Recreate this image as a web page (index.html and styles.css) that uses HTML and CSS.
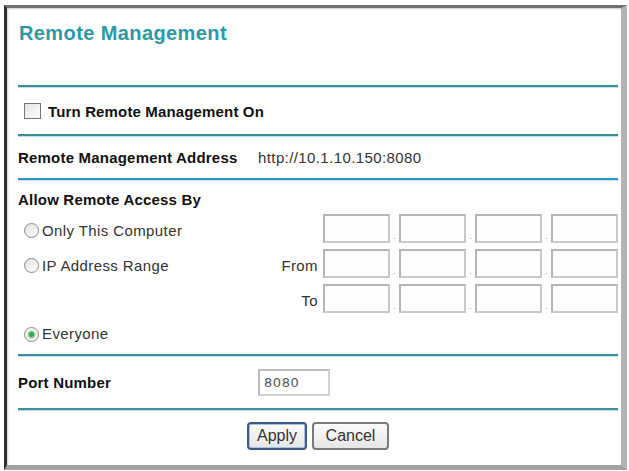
FILE: index.html
```html
<!DOCTYPE html>
<html lang="en">
<head>
    <meta charset="UTF-8">
    <title>Remote Management</title>
    <link rel="stylesheet" href="styles.css">
</head>
<body>

    <form class="frame" id="remoteForm">
        <div class="title-row">
            <h1 class="title">Remote Management</h1>
        </div>
        <div class="rule"></div>

        <div class="row check-row">
            <label class="check"><input type="checkbox" id="enable"> Turn Remote Management On</label>
        </div>
        <div class="rule"></div>

        <div class="row pair-row">
            <span class="key">Remote Management Address</span>
            <span class="value">http://10.1.10.150:8080</span>
        </div>
        <div class="rule rule-blue"></div>

        <div class="access">
            <div class="key">Allow Remote Access By</div>

            <div class="ip-row">
                <label class="opt"><input type="radio" name="access"> Only This Computer</label>
                <span class="ip-label"></span>
                <span class="ip">
                    <input type="text"><i>.</i><input type="text"><i>.</i><input type="text"><i>.</i><input type="text">
                </span>
            </div>
            <div class="ip-row">
                <label class="opt"><input type="radio" name="access"> IP Address Range</label>
                <span class="ip-label">From</span>
                <span class="ip">
                    <input type="text"><i>.</i><input type="text"><i>.</i><input type="text"><i>.</i><input type="text">
                </span>
            </div>
            <div class="ip-row">
                <span class="opt"></span>
                <span class="ip-label">To</span>
                <span class="ip">
                    <input type="text"><i>.</i><input type="text"><i>.</i><input type="text"><i>.</i><input type="text">
                </span>
            </div>

            <label class="opt everyone"><input type="radio" name="access" checked> Everyone</label>
        </div>
        <div class="rule"></div>

        <div class="row port-row">
            <span class="key">Port Number</span>
            <input type="text" class="port" value="8080">
        </div>
        <div class="rule"></div>

        <div class="buttons">
            <button type="button" class="btn btn-main">Apply</button>
            <button type="button" class="btn">Cancel</button>
        </div>
    </form>

</body>
</html>
```

FILE: styles.css
```css
body {
    margin: 0;
    background: #fff;
    font-family: "Liberation Sans", Arial, sans-serif;
    font-size: 15px;
    letter-spacing: 0.4px;
    color: #333;
}

.frame {
    box-sizing: border-box;
    width: 623px;
    height: 465px;
    margin: 5px 0 0 4px;
    padding: 0 3px 0 11px;
    border-left: 3px solid #2e2e2e;
    border-top: 3px solid #707070;
    border-right: 6px solid #b4b4b4;
    border-bottom: 5px solid #a2a2a2;
    box-shadow: inset 1px 1px 2px #ccc;
}

.title-row {
    height: 77px;
    padding-top: 14px;
    box-sizing: border-box;
}

.title {
    margin: 0;
    padding-left: 1px;
    font-size: 20px;
    line-height: 22px;
    letter-spacing: 0.4px;
    color: #2c9aa6;
}

.rule {
    height: 2px;
    background: #3b8c9c;
    box-shadow: 0 1px 0 #b9e4ea;
}

.rule-blue {
    background: #2f96cc;
    box-shadow: 0 1px 0 #bfe3f3;
}

.row {
    display: flex;
    align-items: center;
}

.check-row {
    height: 47px;
    padding-left: 6px;
    padding-top: 1px;
    box-sizing: border-box;
}

.pair-row {
    height: 42px;
}

.key {
    width: 240px;
    font-weight: bold;
    letter-spacing: 0.2px;
    color: #111;
}

.check {
    display: flex;
    align-items: center;
    font-weight: bold;
    letter-spacing: 0.15px;
    color: #111;
}

input[type="checkbox"],
input[type="radio"] {
    appearance: none;
    margin: 0 7px 0 0;
    width: 15px;
    height: 15px;
    border: 1px solid #8a8a8a;
    background: linear-gradient(135deg, #e2e2e2, #fff);
    box-sizing: border-box;
}

input[type="checkbox"] {
    width: 17px;
    height: 16px;
    border-color: #777;
}

input[type="radio"] {
    border-radius: 50%;
    margin-right: 3px;
}

input[type="radio"]:checked {
    background: radial-gradient(circle, #3aa54a 0 2px, #b5e3ba 3.5px, #f4f4f4 5px);
}

.access {
    height: 174px;
    padding-top: 11px;
    box-sizing: border-box;
}

.access .key {
    width: auto;
    line-height: 18px;
    margin-bottom: 5px;
}

.ip-row {
    display: flex;
    align-items: center;
    margin-bottom: 6px;
}

.opt {
    flex: 1;
    display: flex;
    align-items: center;
    line-height: 16px;
    padding-left: 6px;
    padding-top: 4px;
}

.ip-label {
    width: 50px;
    text-align: right;
    line-height: 16px;
    padding: 4px 5px 0 0;
}

.ip {
    display: flex;
    align-items: flex-end;
}

.ip input {
    box-sizing: border-box;
    width: 67px;
    height: 29px;
    margin: 0;
    border: 2px solid #b5b5b5;
    border-right-color: #c9c9c9;
    border-bottom-color: #c9c9c9;
    background: #fdfdfd;
}

.ip i {
    width: 9px;
    font-style: normal;
    font-size: 9px;
    line-height: 14px;
    color: #999;
    text-align: center;
}

.everyone {
    margin-top: 9px;
}

.port-row {
    height: 52px;
}

.port {
    box-sizing: border-box;
    width: 72px;
    height: 27px;
    padding: 0 4px;
    border: 2px solid #bdbdbd;
    border-right-color: #d2d2d2;
    border-bottom-color: #d2d2d2;
    font-family: "DejaVu Sans", sans-serif;
    font-size: 13px;
    letter-spacing: 0.6px;
    color: #555;
}

.buttons {
    display: flex;
    justify-content: center;
    gap: 5px;
    padding-top: 12px;
}

.btn {
    height: 28px;
    padding: 0 6px;
    font-family: "Liberation Sans", Arial, sans-serif;
    font-size: 16px;
    color: #333;
    background: linear-gradient(#fbfbfb, #e6e6e6);
    border: 2px solid #7a7a7a;
    border-radius: 4px;
}

.btn-main {
    width: 60px;
    border-color: #3d5a84;
    box-shadow: inset 0 0 0 1px #a9c1e4;
}

.btn + .btn {
    width: 77px;
}
```
